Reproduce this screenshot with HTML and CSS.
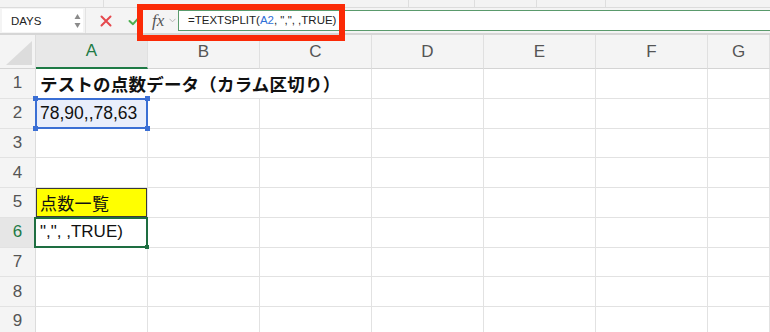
FILE: index.html
```html
<!DOCTYPE html>
<html lang="ja">
<head>
  <meta charset="UTF-8">
  <title>TEXTSPLIT</title>
  <link rel="stylesheet" href="styles.css">
</head>
<body>
  <div class="app">
    <div class="toolbar">
      <span class="tb-seg" style="width:103px"></span>
      <span class="tb-seg" style="width:304px"></span>
      <span class="tb-seg" style="width:65px"></span>
      <span class="tb-seg" style="width:61px"></span>
      <span class="tb-seg" style="width:68px"></span>
      <span class="tb-seg" style="width:166px"></span>
    </div>

    <div class="formula-bar">
      <div class="name-box">
        <span class="name-text">DAYS</span>
        <span class="spinner">
          <svg width="7" height="16" viewBox="0 0 7 16"><path d="M3.5 1 L6.5 6 L0.5 6 Z" fill="#8a8a8a"/><path d="M3.5 15 L6.5 10 L0.5 10 Z" fill="#8a8a8a"/></svg>
        </span>
      </div>
      <div class="fb-buttons">
        <svg class="btn-x" width="12" height="12" viewBox="0 0 12 12"><path d="M1.5 1.5 L10.5 10.5 M10.5 1.5 L1.5 10.5" stroke="#e5484d" stroke-width="2" stroke-linecap="round"/></svg>
        <svg class="btn-ok" width="13" height="11" viewBox="0 0 13 11"><path d="M1.5 6 L5 9.2 L11.5 1.8" stroke="#4caf50" stroke-width="2" fill="none" stroke-linecap="round" stroke-linejoin="round"/></svg>
      </div>
      <div class="fx">
        <span class="fx-label">fx</span>
        <svg class="fx-caret" width="7" height="5" viewBox="0 0 7 5"><path d="M0.5 0.8 L3.5 3.8 L6.5 0.8" stroke="#b5b5b5" stroke-width="1" fill="none"/></svg>
      </div>
      <div class="formula-input">=TEXTSPLIT(<span class="ref">A2</span>, ",", ,TRUE)</div>
      <div class="callout"></div>
    </div>

    <div class="sheet">
      <div class="corner"><span class="corner-tri"></span></div>
      <div class="col-head active">A</div>
      <div class="col-head">B</div>
      <div class="col-head">C</div>
      <div class="col-head">D</div>
      <div class="col-head">E</div>
      <div class="col-head">F</div>
      <div class="col-head">G</div>

      <div class="row-head">1</div>
      <div class="cell title">テストの点数データ（カラム区切り）</div>
      <div class="cell"></div><div class="cell"></div><div class="cell"></div><div class="cell"></div>

      <div class="row-head">2</div>
      <div class="cell selected">78,90,,78,63<span class="h tl"></span><span class="h tr"></span><span class="h bl"></span><span class="h br"></span></div>
      <div class="cell"></div><div class="cell"></div><div class="cell"></div><div class="cell"></div><div class="cell"></div><div class="cell"></div>

      <div class="row-head">3</div>
      <div class="cell"></div><div class="cell"></div><div class="cell"></div><div class="cell"></div><div class="cell"></div><div class="cell"></div><div class="cell"></div>

      <div class="row-head">4</div>
      <div class="cell"></div><div class="cell"></div><div class="cell"></div><div class="cell"></div><div class="cell"></div><div class="cell"></div><div class="cell"></div>

      <div class="row-head">5</div>
      <div class="cell label">点数一覧</div>
      <div class="cell"></div><div class="cell"></div><div class="cell"></div><div class="cell"></div><div class="cell"></div><div class="cell"></div>

      <div class="row-head active">6</div>
      <div class="cell editing">",", ,TRUE)<span class="h br green"></span></div>
      <div class="cell"></div><div class="cell"></div><div class="cell"></div><div class="cell"></div><div class="cell"></div><div class="cell"></div>

      <div class="row-head">7</div>
      <div class="cell"></div><div class="cell"></div><div class="cell"></div><div class="cell"></div><div class="cell"></div><div class="cell"></div><div class="cell"></div>

      <div class="row-head">8</div>
      <div class="cell"></div><div class="cell"></div><div class="cell"></div><div class="cell"></div><div class="cell"></div><div class="cell"></div><div class="cell"></div>

      <div class="row-head">9</div>
      <div class="cell"></div><div class="cell"></div><div class="cell"></div><div class="cell"></div><div class="cell"></div><div class="cell"></div><div class="cell"></div>
    </div>
  </div>
</body>
</html>
```

FILE: styles.css
```css
body {
  margin: 0;
  font-family: "Liberation Sans", "Noto Sans CJK JP", sans-serif;
  background-color: #fff;
  overflow: hidden;
}

.app {
  width: 770px;
  height: 332px;
  overflow: hidden;
}

.toolbar {
  display: flex;
  height: 7px;
  background-color: #f3f3f3;
  border-bottom: 1px solid #dcdcdc;
}

.tb-seg {
  flex: none;
  border-right: 1px solid #dedede;
}

.formula-bar {
  position: relative;
  display: flex;
  align-items: center;
  height: 25px;
  background-color: #f4f4f4;
  border-bottom: 2px solid #d6d6d6;
}

.name-box {
  display: flex;
  align-items: center;
  justify-content: space-between;
  width: 81px;
  height: 23px;
  margin-left: 2px;
  background-color: #fff;
  box-sizing: border-box;
  padding: 0 2px 0 9px;
}

.name-text {
  font-size: 11.5px;
  color: #222;
}

.spinner {
  display: flex;
}

.fb-buttons {
  display: flex;
  align-items: center;
  gap: 16px;
  height: 100%;
  box-sizing: border-box;
  width: 58px;
  padding-left: 14px;
  margin-left: 2px;
  border-left: 1px solid #e3e3e3;
}

.fx {
  display: flex;
  align-items: center;
  gap: 5px;
  padding-left: 9px;
  box-sizing: border-box;
  width: 35px;
}

.fx-label {
  font-family: "Liberation Serif", serif;
  font-style: italic;
  font-size: 17px;
  color: #555;
}

.formula-input {
  flex: 1;
  height: 21px;
  box-sizing: border-box;
  background-color: #fff;
  border: 1px solid #5a9a6c;
  border-right: none;
  padding-left: 9px;
  font-size: 11.5px;
  line-height: 19px;
  color: #222;
  white-space: nowrap;
}

.ref {
  color: #2f6fd6;
}

.callout {
  position: absolute;
  left: 137px;
  top: -4px;
  width: 208px;
  height: 37px;
  box-sizing: border-box;
  border: 6px solid #fb2a06;
}

.sheet {
  display: grid;
  grid-template-columns: 36px repeat(6, 112px) 62px;
  grid-template-rows: 34px;
  grid-auto-rows: 29.75px;
}

.corner {
  position: relative;
  background-color: #f4f4f4;
  border-right: 1px solid #dcdcdc;
  border-bottom: 1px solid #d4d4d4;
}

.corner-tri {
  position: absolute;
  right: 3px;
  bottom: 3px;
  width: 0;
  height: 0;
  border-left: 26px solid transparent;
  border-bottom: 24px solid #dcdcdc;
}

.col-head {
  display: flex;
  align-items: center;
  justify-content: center;
  background-color: #f4f4f4;
  border-right: 1px solid #e0e0e0;
  border-bottom: 1px solid #d4d4d4;
  font-size: 17px;
  color: #555;
  box-sizing: border-box;
}

.col-head.active {
  background-color: #e8e8e8;
  color: #1e7a45;
  border-bottom: 2px solid #1e7a45;
}

.row-head {
  display: flex;
  align-items: center;
  justify-content: center;
  background-color: #f4f4f4;
  border-right: 1px solid #dcdcdc;
  border-bottom: 1px solid #e2e2e2;
  font-size: 17px;
  color: #555;
}

.row-head.active {
  background-color: #e6e6e6;
  color: #1e7a45;
}

.cell {
  position: relative;
  display: flex;
  align-items: center;
  padding-left: 4px;
  border-right: 1px solid #e2e2e2;
  border-bottom: 1px solid #e2e2e2;
  font-size: 17.5px;
  color: #111;
  white-space: nowrap;
}

.title {
  grid-column: span 3;
  font-weight: bold;
  font-family: "Noto Sans CJK JP", sans-serif;
  font-size: 17.5px;
  letter-spacing: 0.2px;
}

.selected {
  background-color: #e9eefb;
}

.selected::after {
  content: "";
  position: absolute;
  left: -1px;
  top: -1px;
  right: -1px;
  bottom: -1px;
  border: 2px solid #3b6fd4;
}

.label {
  background-color: #ffff00;
  font-family: "Noto Sans CJK JP", sans-serif;
  font-size: 17px;
  letter-spacing: 0.3px;
  box-shadow: inset 0 0 0 1px #3a3a3a;
}

.editing {
  font-size: 17px;
}

.editing::after {
  content: "";
  position: absolute;
  left: -2px;
  top: -1px;
  right: -1px;
  bottom: -1px;
  border: 2px solid #1e6e41;
}

.h {
  position: absolute;
  width: 5px;
  height: 5px;
  background-color: #3b6fd4;
  z-index: 2;
}

.h.tl { left: -3px; top: -3px; }
.h.tr { right: -3px; top: -3px; }
.h.bl { left: -3px; bottom: -3px; }
.h.br { right: -3px; bottom: -3px; }

.h.green {
  background-color: #1e6e41;
  right: -2px;
  bottom: -2px;
  width: 4px;
  height: 4px;
}
```
